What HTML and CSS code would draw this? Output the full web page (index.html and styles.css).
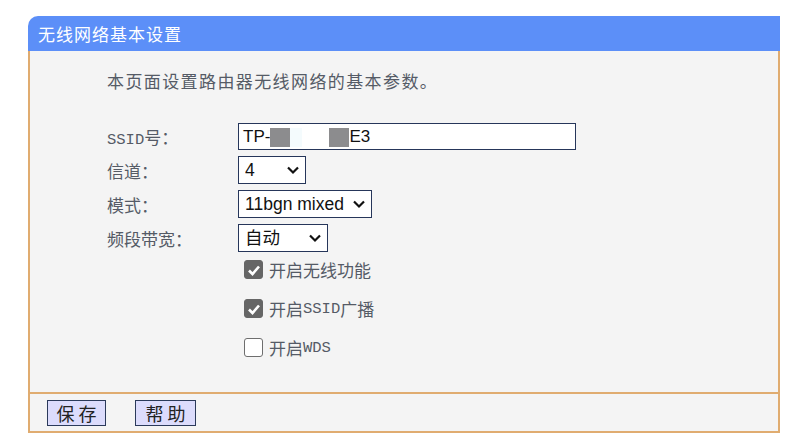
FILE: index.html
```html
<!DOCTYPE html>
<html lang="zh-CN">
<head>
  <meta charset="UTF-8" />
  <title>无线网络基本设置</title>
  <link rel="stylesheet" href="styles.css">
</head>
<body>

  <div class="panel">
    <div class="panel-title">无线网络基本设置</div>

    <div class="panel-body">
      <p class="intro">本页面设置路由器无线网络的基本参数。</p>

      <div class="form">
        <label class="label"><span class="en">SSID</span>号：</label>
        <div class="text-field">
          <span>TP-</span><span class="mask"></span><span class="mask light"></span><span class="gap"></span><span class="mask"></span><span>E3</span>
        </div>

        <label class="label">信道：</label>
        <select class="sel w-channel">
          <option>4</option>
        </select>

        <label class="label">模式：</label>
        <select class="sel w-mode">
          <option>11bgn mixed</option>
        </select>

        <label class="label">频段带宽：</label>
        <select class="sel w-band">
          <option>自动</option>
        </select>
      </div>

      <div class="checks">
        <label class="check"><input type="checkbox" checked disabled>开启无线功能</label>
        <label class="check"><input type="checkbox" checked disabled>开启<span class="en">SSID</span>广播</label>
        <label class="check"><input type="checkbox">开启<span class="en">WDS</span></label>
      </div>
    </div>

    <div class="panel-foot">
      <button>保 存</button>
      <button>帮 助</button>
    </div>
  </div>

</body>
</html>
```

FILE: styles.css
```css
body {
  margin: 0;
  background: #fff;
  font-family: 'Noto Sans CJK SC', sans-serif;
}

.panel {
  width: 752px;
  margin: 16px 0 0 28px;
}

.panel-title {
  height: 35px;
  line-height: 35px;
  padding-left: 10px;
  background: #5c8ff8;
  color: #fff;
  font-size: 17px;
  letter-spacing: 1px;
  border-top-left-radius: 10px;
}

.panel-body {
  background: #f4f4f4;
  border-left: 2px solid #e0ac70;
  border-right: 2px solid #e0ac70;
  padding: 18px 0 31px 77px;
}

.intro {
  margin: 0 0 30px 0;
  font-size: 17px;
  line-height: 24px;
  color: #555b66;
  letter-spacing: 1.4px;
}

.form {
  display: grid;
  grid-template-columns: 131px auto;
  row-gap: 6px;
  align-items: center;
  justify-items: start;
}

.label {
  font-size: 17px;
  color: #555b66;
  letter-spacing: 0;
}

.en {
  font-family: 'Liberation Mono', monospace;
  font-size: 15.5px;
  letter-spacing: 0;
}

.text-field {
  box-sizing: border-box;
  width: 338px;
  height: 27px;
  border: 1px solid #26365a;
  background: #fff;
  display: flex;
  align-items: center;
  padding-left: 4px;
  font-family: 'Liberation Sans', Arial, sans-serif;
  font-size: 17px;
  color: #111;
}

.mask {
  width: 20px;
  height: 19px;
  margin-top: 2px;
  background: #8c8c8e;
}

.mask.light {
  width: 12px;
  background: #f4fbfd;
}

.gap {
  width: 27px;
}

.sel {
  box-sizing: border-box;
  appearance: none;
  -webkit-appearance: none;
  height: 28px;
  border: 1px solid #26365a;
  border-radius: 0;
  padding: 0 0 0 6px;
  font-family: 'Liberation Sans', Arial, 'Noto Sans CJK SC', sans-serif;
  font-size: 17.5px;
  color: #111;
  background-color: #fff;
  background-image: url("data:image/svg+xml;utf8,<svg xmlns='http://www.w3.org/2000/svg' width='14' height='10' viewBox='0 0 14 10'><path d='M2 2.5 L7 7.5 L12 2.5' fill='none' stroke='%23111' stroke-width='2.2'/></svg>");
  background-repeat: no-repeat;
  background-position: right 5px center;
}

.w-channel { width: 68px; }
.w-mode { width: 134px; }
.w-band { width: 90px; }

.checks {
  margin: 4px 0 0 137px;
  display: flex;
  flex-direction: column;
  gap: 12px;
}

.check {
  display: flex;
  align-items: center;
  font-size: 17px;
  color: #555b66;
  height: 27px;
}

.check input {
  appearance: none;
  -webkit-appearance: none;
  width: 19px;
  height: 19px;
  margin: 0 6px 0 0;
  border: 1.5px solid #6e6e6e;
  border-radius: 3px;
  background: #fff;
}

.check input:checked {
  background-color: #666;
  border-color: #666;
  background-image: url("data:image/svg+xml;utf8,<svg xmlns='http://www.w3.org/2000/svg' width='16' height='16' viewBox='0 0 16 16'><path d='M3 8.5 L6.5 12 L13 4.5' fill='none' stroke='%23fff' stroke-width='2.6'/></svg>");
  background-repeat: no-repeat;
  background-position: center;
}

.panel-foot {
  background: #f4f4f4;
  border: 2px solid #e0ac70;
  height: 37px;
  display: flex;
  align-items: center;
  gap: 29px;
  padding-left: 17px;
}

.panel-foot button {
  height: 26px;
  width: 59px;
  padding: 0;
  border: 1px solid #2b3a5a;
  background: #dcdcfc;
  color: #222;
  font-family: 'Noto Sans CJK SC', sans-serif;
  font-size: 18px;
  line-height: 24px;
}

.panel-foot button + button {
  width: 61px;
}
```
